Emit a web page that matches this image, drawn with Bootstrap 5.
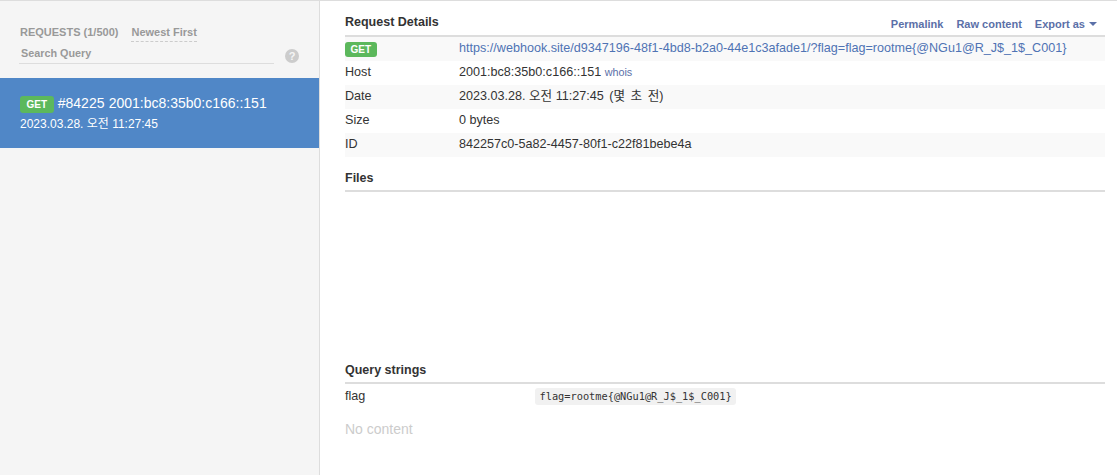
<!DOCTYPE html>
<html lang="ko">
<head>
<meta charset="utf-8">
<title>Webhook</title>
<link href="https://cdn.jsdelivr.net/npm/bootstrap@5.3.0/dist/css/bootstrap.min.css" rel="stylesheet">
<style>
html,body{height:475px;overflow:hidden}
body{font-family:"Liberation Sans","Noto Sans CJK KR",sans-serif;font-size:14px;line-height:20px;color:#333;background:#fff}
.shell{height:475px;border-top:1px solid #ddd}
.side{width:320px;flex:none;background:#f5f5f5;border-right:1px solid #ddd}
.side-head{padding:23px 20px 0 20px;height:77px}
.reqline{font-size:11px;font-weight:700;color:#999;line-height:16px}
.sortby{margin-left:10px;color:#999;border-bottom:1px dashed #ccc;display:inline-block;line-height:15px;padding-bottom:1px}
.searchrow{margin-top:2px;width:280px}
.searchbox{width:255px;flex:none;border-bottom:1px solid #ddd;font-size:10.8px;font-weight:700;color:#999;line-height:18px;height:20px;padding-left:2px;margin-left:-1px}
.helpdot{width:14px;height:14px;flex:none;margin-left:11px;margin-top:5px;border-radius:50%;background:#ccc;color:#f5f5f5;font-size:11px;font-weight:700;line-height:14px;text-align:center}
.req-item{background:#5087c7;color:#fff;height:70px;padding:15px 20px 0}
.req-title{font-size:14px;line-height:20px;height:20px;word-spacing:.3px}
.req-date{font-size:12px;line-height:20px;margin-top:1px}
.getlabel{display:inline-block;background:#5cb85c;color:#fff;font-size:10px;font-weight:700;border-radius:3px}
.req-title .getlabel{line-height:17px;height:17px;padding:0 6.5px;vertical-align:0}
.rowkey .getlabel{line-height:15px;height:15px;padding:0 5.5px;vertical-align:top;margin-top:5px}
.pane{padding:0 12px 0 25px;min-width:0}
.sect-title{font-size:12.5px;font-weight:700;color:#333;line-height:18px}
.sect-head{border-bottom:2px solid #ddd;height:36px;padding-top:12px}
.sect-links{font-size:11px;font-weight:700;line-height:14px;gap:13px;padding-right:8px;padding-top:4px}
.sect-links a,.rowval a{color:#4a6fa5;text-decoration:none}
.sect-links a{color:#5b70a8}
.caretmark{display:inline-block;width:0;height:0;border-left:4px solid transparent;border-right:4px solid transparent;border-top:4px solid #5b70a8;vertical-align:2px;margin-left:1px}
.info-row{height:24px;font-size:12.6px;line-height:22px;color:#333}
.info-row:nth-child(odd){background:#f9f9f9}
.rowkey{width:114px;flex:none}
.rowval a.hook{color:#4f73b4}
.whois{font-size:10.8px;color:#5b70a8 !important}
.agotext{word-spacing:2px;margin-left:2px}
.files-head{margin-top:10px;height:25px;border-bottom:2px solid #ddd;padding-top:2px}
.files-gap{height:167px}
.query-row{height:24px;font-size:12.6px;line-height:20px;padding-top:2px}
.query-key{width:190px;flex:none}
.query-code{font-family:"DejaVu Sans Mono","Liberation Mono",monospace;font-size:10.3px;line-height:17px;height:17px;background:#f1f1f1;color:#333;border-radius:3px;padding:0 4.5px;display:inline-block}
.nocontent{font-size:14px;color:#ccc;line-height:20px;margin-top:11px}
</style>
</head>
<body>
<div class="shell d-flex">
  <aside class="side">
    <div class="side-head">
      <div class="reqline">REQUESTS (1/500) <span class="sortby">Newest First</span></div>
      <div class="searchrow d-flex">
        <div class="searchbox">Search Query</div>
        <div class="helpdot">?</div>
      </div>
    </div>
    <div class="req-item">
      <div class="req-title"><span class="getlabel">GET</span> #84225 2001:bc8:35b0:c166::151</div>
      <div class="req-date">2023.03.28. 오전 11:27:45</div>
    </div>
  </aside>
  <main class="pane flex-grow-1">
    <div class="sect-head d-flex justify-content-between">
      <div class="sect-title">Request Details</div>
      <div class="sect-links d-flex">
        <a href="#">Permalink</a>
        <a href="#">Raw content</a>
        <a href="#">Export as <span class="caretmark"></span></a>
      </div>
    </div>
    <div class="info-rows">
      <div class="info-row d-flex"><div class="rowkey"><span class="getlabel">GET</span></div><div class="rowval"><a class="hook" href="#">https://webhook.site/d9347196-48f1-4bd8-b2a0-44e1c3afade1/?flag=flag=rootme{@NGu1@R_J$_1$_C001}</a></div></div>
      <div class="info-row d-flex"><div class="rowkey">Host</div><div class="rowval">2001:bc8:35b0:c166::151 <a class="whois" href="#">whois</a></div></div>
      <div class="info-row d-flex"><div class="rowkey">Date</div><div class="rowval">2023.03.28. 오전 11:27:45 <span class="agotext">(몇 초 전)</span></div></div>
      <div class="info-row d-flex"><div class="rowkey">Size</div><div class="rowval">0 bytes</div></div>
      <div class="info-row d-flex"><div class="rowkey">ID</div><div class="rowval">842257c0-5a82-4457-80f1-c22f81bebe4a</div></div>
    </div>
    <div class="sect-title files-head">Files</div>
    <div class="files-gap"></div>
    <div class="sect-title files-head mt-0">Query strings</div>
    <div class="query-row d-flex"><div class="query-key">flag</div><div><span class="query-code">flag=rootme{@NGu1@R_J$_1$_C001}</span></div></div>
    <div class="nocontent">No content</div>
  </main>
</div>
<script src="https://cdn.jsdelivr.net/npm/bootstrap@5.3.0/dist/js/bootstrap.bundle.min.js"></script>
</body>
</html>
